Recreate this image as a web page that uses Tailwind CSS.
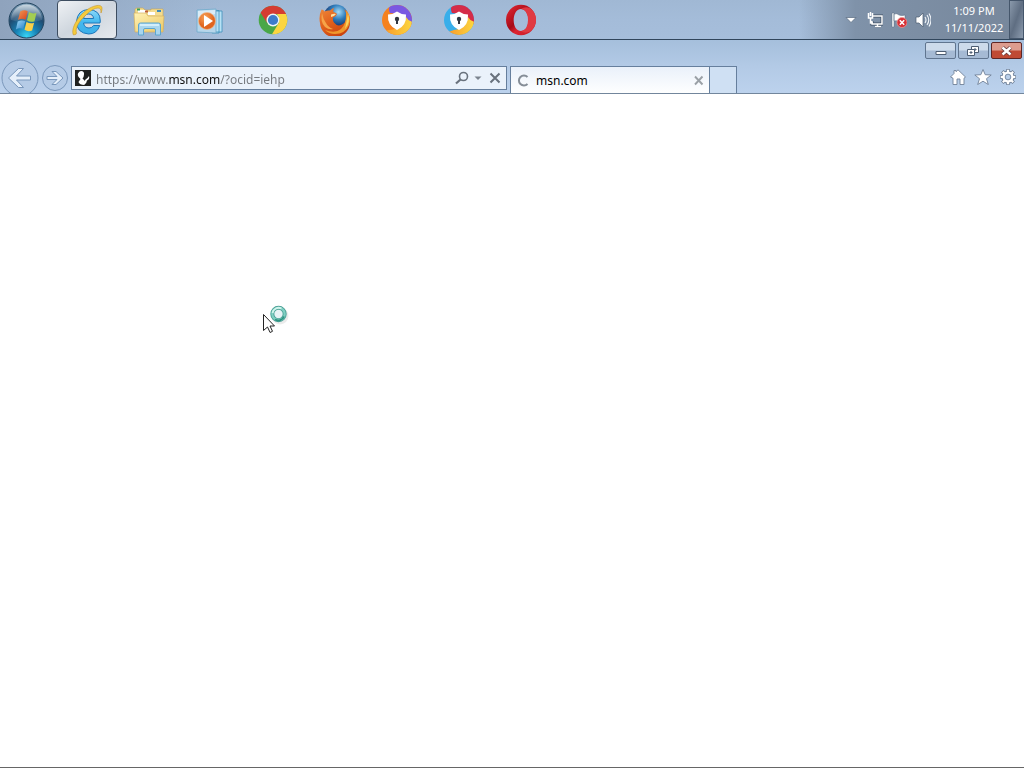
<!DOCTYPE html>
<html lang="en">
<head>
  <meta charset="UTF-8">
  <meta name="viewport" content="width=device-width, initial-scale=1.0">
  <title>msn.com</title>
  <script src="https://cdn.jsdelivr.net/npm/@tailwindcss/browser@4"></script>
</head>
<body class="relative flex flex-col h-screen overflow-hidden bg-white text-xs font-['Noto_Sans','Open_Sans',sans-serif]">

  <!-- Taskbar -->
  <header class="flex shrink-0 justify-between h-10 border-b border-[#31465c] bg-linear-to-b from-[#a0b8d4] via-[#a4bcd9] to-[#a6bedb]">
    <nav class="flex items-center bg-linear-to-r from-[#8fa3bd] to-transparent to-40%" aria-label="Taskbar">
      <button type="button" aria-label="Start" class="w-14 pl-2 h-full">
        <svg class="size-[38px]" viewBox="0 0 38 38">
          <defs>
            <radialGradient id="orb" cx=".5" cy=".95" r=".9"><stop offset="0" stop-color="#38d5f5"/><stop offset=".35" stop-color="#1881b4"/><stop offset=".7" stop-color="#1f4a70"/><stop offset="1" stop-color="#7799b3"/></radialGradient>
            <linearGradient id="gloss" x2="0" y2="1"><stop stop-color="#fff" stop-opacity=".6"/><stop offset="1" stop-color="#fff" stop-opacity=".05"/></linearGradient>
            <linearGradient id="wr" x2="1" y2="1"><stop stop-color="#ef9a55"/><stop offset="1" stop-color="#d8401c"/></linearGradient>
            <linearGradient id="wb" x2="1" y2="1"><stop stop-color="#9bd8f8"/><stop offset="1" stop-color="#287fc5"/></linearGradient>
          </defs>
          <circle cx="18.500" cy="19.500" r="17.500" fill="url(#orb)" stroke="#24455f"/>
          <path d="M3 19a15.500 15.500 0 0 1 31 0q-15.500 5-31 0z" fill="url(#gloss)"/>
          <path d="M12.200 10.500q4-2.500 7.500-.3l-2 8.500q-4-2-7.700.4z" fill="url(#wr)"/>
          <path d="M21 11q4 2.500 7.500.7l-2 8.500q-4 1.500-7.500-1z" fill="#a3cd52"/>
          <path d="M9.700 20.500q4-2 7.500-.2l-2 8q-3.500-2-7.300.2z" fill="url(#wb)"/>
          <path d="M18.500 21q4 2.300 7.600.7l-2 7.700q-4 1.800-7.600-.7z" fill="#fad048"/>
        </svg>
      </button>
      <div class="flex items-center h-full">
        <button type="button" aria-label="Internet Explorer" class="flex items-center justify-center w-[60px] h-full mx-px rounded-sm border border-[#3d4d60] bg-linear-to-br from-[#eff2f5] via-[#cfd6de] to-[#e5e9ee]">
          <svg class="w-8 h-8" viewBox="0 0 32 32">
            <defs><linearGradient id="ie" x2="0" y2="1"><stop stop-color="#8ed9fa"/><stop offset=".5" stop-color="#45b9ef"/><stop offset="1" stop-color="#3caee8"/></linearGradient></defs>
            <path d="M29 19H12.500q.8 5 5.500 5 3.200 0 4.500-2.500h6.200Q26 30 17.600 30 5.500 29 5.500 17.500 6.500 6 17.500 5.500 29.500 6 29.300 17zM12.600 14.500h10q-.5-4.500-5-4.500t-5 4.500z" fill="url(#ie)" stroke="#1c76ba"/>
            <path d="M2.500 31C-1 25 8 10 18 4.500 25 .5 31 .5 31 4q.2 2-1 5 .3-5-3-5-5 0-12 7C7 18 4 25 5.500 29q.5 1.500-3 2z" fill="#f5cb3c" stroke="#c8962b" stroke-width=".6"/>
          </svg>
        </button>
        <button type="button" aria-label="Windows Explorer" class="flex items-center justify-center w-[62px] h-full">
          <svg class="w-8 h-8" viewBox="0 0 32 32">
            <defs><linearGradient id="fold" x2="1" y2="1"><stop stop-color="#fff2b5"/><stop offset="1" stop-color="#ecc864"/></linearGradient></defs>
            <path d="M2 5l2-1h6l2 2h6V5h12v20H2z" fill="#f3dc90" stroke="#c9a552" stroke-width=".6"/>
            <path d="M5 6h8v3H5zM15 8h7v3h-7z" fill="#fff"/><path d="M4 4.500h3v2H4z" fill="#38a05a"/><path d="M24 6h4v2h-4z" fill="#3989bd"/><path d="M12 6.500h3v2h-3z" fill="#bd5c38"/>
            <path d="M1 9h12l2 3h16l-1 16H2z" fill="url(#fold)" stroke="#d2b061" stroke-width=".7"/>
            <path d="M5.500 31V21q0-2 2-2h18q2 0 2 2v10h-5v-5q0-1.500-1.500-1.500h-9Q10.500 24.500 10.500 26v5z" fill="#a9d6ee" stroke="#5ca6cf"/>
            <path d="M7 21h19" stroke="#e1f6ff" stroke-width="1.500"/>
          </svg>
        </button>
        <button type="button" aria-label="Windows Media Player" class="flex items-center justify-center w-[62px] h-full">
          <svg class="w-8 h-8" viewBox="0 0 32 32">
            <defs><radialGradient id="wmp" cx=".4" cy=".3"><stop stop-color="#f9a55a"/><stop offset="1" stop-color="#e0651f"/></radialGradient></defs>
            <path d="M19 7h8v21h-8zM17 6.500h7V29h-7z" fill="#b8e2f5" stroke="#3d8fba" stroke-width=".8"/>
            <path d="M2 6l19-1v24L2 28z" fill="#b6d6eb" stroke="#6fa9ca" stroke-width=".8"/><path d="M3 7l17-1v4L3 14z" fill="#d9ecf7"/>
            <circle cx="12" cy="17" r="8.500" fill="url(#wmp)" stroke="#f0bd90" stroke-width=".7"/>
            <path d="M9 11l9 6-9 6z" fill="#fff"/>
          </svg>
        </button>
        <button type="button" aria-label="Google Chrome" class="flex items-center justify-center w-[62px] h-full">
          <svg class="w-8 h-8" viewBox="0 0 32 32">
            <circle cx="16" cy="16" r="14.300" fill="#49a747"/>
            <path d="M3.600 8.850A14.300 14.300 0 0 1 28.400 8.850L29 10H16a6.500 6.500 0 0 0-5.600 9.500z" fill="#d53c32"/>
            <path d="M29 10A14.300 14.300 0 0 1 15 30.300l6.600-11Q23.500 14.500 20 10z" fill="#fbd540"/>
            <circle cx="16" cy="16" r="6.500" fill="#f1f5f6"/><circle cx="16" cy="16" r="5.100" fill="#3d7ccb"/>
          </svg>
        </button>
        <button type="button" aria-label="Firefox" class="flex items-center justify-center w-[62px] h-full">
          <svg class="w-8 h-8" viewBox="0 0 32 32">
            <defs>
              <radialGradient id="globe" cx=".6" cy=".3" r=".6"><stop stop-color="#a5dcf8"/><stop offset=".5" stop-color="#2f7cba"/><stop offset="1" stop-color="#15306a"/></radialGradient>
              <linearGradient id="fox" x2=".6" y2="1"><stop stop-color="#ee8a3c"/><stop offset=".5" stop-color="#e2621d"/><stop offset="1" stop-color="#c9430f"/></linearGradient>
            </defs>
            <circle cx="17" cy="13" r="12.500" fill="url(#globe)"/>
            <path d="M2.500 5.500q2 0 3 2Q8 6 11 6.500q3-3 4-2.500-1 2-.5 4 3 1 3.500 2-1 3-4 3.500-.5 3 1 5 3 4 7 2.500 5-2 5.500-7 .5-5-2.500-9 6.500 5 6 12.500A15 15 0 0 1 1 19Q-.5 12 2.500 5.500z" fill="url(#fox)"/>
            <path d="M27 6q6 7 3 15-4 9-14 9-6 0-10-4 10 4 16-1 6-5 5-19z" fill="#f0982c"/>
            <path d="M29 10q3 8-3 15 1-5 3-15z" fill="#fbd45a"/>
            <path d="M3 9q-2 9 3 14 4 3 8 2-5-2-7-6-3-4-4-10z" fill="#f7a448"/>
            <path d="M12 10.500q3-1 5-.5l-2 2-3 1z" fill="#ffe0a0"/>
          </svg>
        </button>
        <button type="button" aria-label="Avast Secure Browser" class="flex items-center justify-center w-[62px] h-full">
          <svg class="w-8 h-8" viewBox="0 0 32 32">
            <defs>
              <clipPath id="disc"><circle cx="16" cy="16" r="15"/></clipPath>
              <linearGradient id="gold" x2="1" y2="0"><stop stop-color="#f79a2c"/><stop offset="1" stop-color="#fcd940"/></linearGradient>
            </defs>
            <g clip-path="url(#disc)">
              <path d="M0 0h32v32H0z" fill="#f5811f"/>
              <path d="M9 0h23v21l-7-4Q21 9 9 9 7 6 9 0z" fill="#7a58e2"/>
              <path d="M32 18q-5-1-7-5-2 12-17 13l-5 1 5 5h24z" fill="url(#gold)"/>
            </g>
            <path d="M16 7.500q4 3 9 3 1 11-9 15.500Q6 21.500 7 10.500q5 0 9-3z" fill="#fff"/>
            <circle cx="16" cy="15" r="2.200" fill="#303641"/><path d="M15 15h2v5h-2z" fill="#303641"/>
          </svg>
        </button>
        <button type="button" aria-label="AVG Secure Browser" class="flex items-center justify-center w-[62px] h-full">
          <svg class="w-8 h-8" viewBox="0 0 32 32">
            <g clip-path="url(#disc)">
              <path d="M0 0h32v32H0z" fill="#38aeea"/>
              <path d="M9 0h23v21l-7-4Q21 9 9 9 7 6 9 0z" fill="#d52c48"/>
              <path d="M32 18q-5-1-7-5-2 12-14 13l-6 2 3 4h24z" fill="url(#gold)"/>
            </g>
            <path d="M16 7.500q4 3 9 3 1 11-9 15.500Q6 21.500 7 10.500q5 0 9-3z" fill="#fff"/>
            <circle cx="16" cy="15" r="2.200" fill="#303641"/><path d="M15 15h2v5h-2z" fill="#303641"/>
          </svg>
        </button>
        <button type="button" aria-label="Opera" class="flex items-center justify-center w-[62px] h-full">
          <svg class="w-8 h-8" viewBox="0 0 32 32">
            <defs><linearGradient id="op" x2="1" y2="1"><stop stop-color="#e92b36"/><stop offset=".45" stop-color="#a60b18"/><stop offset=".6" stop-color="#dd2531"/><stop offset="1" stop-color="#c21c28"/></linearGradient></defs>
            <path fill-rule="evenodd" d="M16 .8a15 15.200 0 1 1 0 30.400A15 15.200 0 0 1 16 .8zM16 5c-9.500 0-10 22 0 22s9.500-22 0-22z" fill="url(#op)"/>
            <path d="M16 5q4-3 9-1 6 5 6 12t-6 11.500q-5 2.500-9-.5 7-1 7-11T16 5z" fill="#e03a42"/>
          </svg>
        </button>
      </div>
    </nav>

    <!-- Tray -->
    <div class="flex items-center bg-linear-to-r from-transparent via-[#7f92a9] via-25% to-[#77879b] pl-11">
      <div class="flex items-center gap-2">
        <button type="button" aria-label="Show hidden icons" class="w-4">
          <svg class="w-4 h-4" viewBox="0 0 16 16"><path d="M3 5.500h10l-5 5z" fill="#fff" stroke="#56687e" stroke-width=".7"/></svg>
        </button>
        <svg class="w-4 h-4" viewBox="0 0 16 16" aria-label="Network">
          <path d="M6 4h9v8H5V9M8 14h6M10.500 12v2" fill="none" stroke="#3e4f63" stroke-width="3"/>
          <path d="M6 4h9v8H5V9M8 14.500h6M10.500 12v2M1.500 1v5h4V1M3.500 0v4M3.500 6v5H6" fill="none" stroke="#fff" stroke-width="1.500"/>
        </svg>
        <svg class="w-4 h-4" viewBox="0 0 16 16" aria-label="Action Center">
          <path d="M1 1h2v14H1zM3 2q3-1 5 1 3 1 6 0v7q-3 1-6 0-2-2-5-1z" fill="#fff" stroke="#56687e" stroke-width=".5"/>
          <circle cx="11" cy="10.500" r="5" fill="#d83035" stroke="#f29a97" stroke-width=".7"/>
          <path d="M8.800 8.300l4.400 4.400M13.200 8.300l-4.400 4.400" stroke="#fff" stroke-width="1.500"/>
        </svg>
        <svg class="w-4 h-4" viewBox="0 0 16 16" aria-label="Volume">
          <path d="M1 5h3l4-4v14l-4-4H1z" fill="#fff" stroke="#4a5b70" stroke-width=".7"/>
          <path d="M10 5q2 3 0 6M12 3q3.500 5 0 10M14 1.500q4 6.500 0 13" fill="none" stroke="#f2f6fa" stroke-width="1.100"/>
        </svg>
      </div>
      <time datetime="2022-11-11T13:09" class="w-[78px] pl-2 pb-0.5 text-center text-[11px] leading-[17px] text-white"><span class="block">1:09 PM</span><span class="block">11/11/2022</span></time>
      <button type="button" aria-label="Show desktop" class="w-[15px] h-full border border-[#45566b] bg-linear-to-br from-[#8a99ab] via-[#5f6e82] to-[#8d9caf]"></button>
    </div>
  </header>

  <!-- Browser frame -->
  <div class="shrink-0 h-[54px] overflow-hidden border-b border-[#72869c] bg-linear-to-b from-[#a5bfdc] via-[#b3cae6] to-[#bcd2ed]">
    <div class="flex justify-end gap-0.5 h-[19px] pt-0.5 pr-0.5">
      <button type="button" aria-label="Minimize" class="flex items-center justify-center w-[31px] rounded-xs border border-[#60758f] bg-linear-to-b from-[#cddbeb] from-45% to-[#a5bad4] to-55%">
        <svg class="w-4 h-4" viewBox="0 0 16 16"><path d="M3 8.500h10v3H3z" fill="#fff" stroke="#4c5d72"/></svg>
      </button>
      <button type="button" aria-label="Restore" class="flex items-center justify-center w-[31px] rounded-xs border border-[#60758f] bg-linear-to-b from-[#cddbeb] from-45% to-[#a5bad4] to-55%">
        <svg class="w-4 h-4" viewBox="0 0 16 16"><path fill-rule="evenodd" d="M5.500 3.500h7v6h-7zM8 6v1h2V6z" fill="#fff" stroke="#4c5d72"/><path fill-rule="evenodd" d="M1.500 6.500h7v6h-7zM4 9v1h2V9z" fill="#fff" stroke="#4c5d72"/></svg>
      </button>
      <button type="button" aria-label="Close" class="flex items-center justify-center w-[31px] rounded-xs border border-[#5f2625] bg-linear-to-b from-[#dd9c8e] from-45% to-[#c04a34] to-55%">
        <svg class="w-4 h-4" viewBox="0 0 16 16"><path d="M3.500 4.500l8 7M11.500 4.500l-8 7" stroke="#63383a" stroke-width="4"/><path d="M3.500 4.500l8 7M11.500 4.500l-8 7" stroke="#fff" stroke-width="2.400"/></svg>
      </button>
    </div>

    <div class="flex items-start">
      <div class="flex items-center w-[71px] shrink-0">
        <button type="button" aria-label="Back">
          <svg class="w-10 h-[38px]" viewBox="0 0 40 38">
            <circle cx="20" cy="19" r="18" fill="#b5cbe6" stroke="#7b98bb"/>
            <path d="M8.500 19l10-9.500h5l-7 7.500h14v4h-14l7 7.500h-5z" fill="#e5effa" stroke="#7997bb"/>
          </svg>
        </button>
        <button type="button" aria-label="Forward" class="pl-0.5">
          <svg class="w-[27px] h-[38px]" viewBox="0 0 27 38">
            <circle cx="13" cy="19" r="12.500" fill="#b5cbe6" stroke="#7b98bb"/>
            <path d="M21 19l-7 6.500h-4l5-5H5v-3h10l-5-5h4z" fill="#e5effa" stroke="#7997bb"/>
          </svg>
        </button>
      </div>
      <form class="flex items-center mt-[7px] w-[436px] h-6 pl-[3px] pr-1 border border-[#667f9d] bg-[#eaf2fb]" onsubmit="return false">
        <svg class="w-4 h-4 shrink-0" viewBox="0 0 16 16"><path d="M0 0h16v16H0z" fill="#20211f"/><path d="M6 1Q9.500 1 9 4.500q0 2-1.500 4l2 2V15q-5 0-6-3l2-3Q2 6 3 3.500T6 1zM14 6q1 3-2 4.500-.5 3.500-3 4.500 0-4 1.500-5.500Q12.500 8.500 14 6z" fill="#fff"/></svg>
        <input type="text" aria-label="Address" value="https://www.msn.com/?ocid=iehp" spellcheck="false" class="flex-1 min-w-0 ml-[5px] h-[22px] pt-0.5 leading-5 text-transparent caret-black bg-clip-text bg-[linear-gradient(90deg,#75797e_72px,#111_72px,#111_124px,#75797e_124px)] outline-none">
        <button type="submit" aria-label="Search"><svg class="w-4 h-4" viewBox="0 0 16 16"><circle cx="9.500" cy="6.500" r="4" fill="none" stroke="#69727d" stroke-width="1.600"/><path d="M6.500 9.500l-4.500 4" stroke="#69727d" stroke-width="2.200"/></svg></button>
        <button type="button" aria-label="Show address list"><svg class="w-4 h-4" viewBox="0 0 16 16"><path d="M4.500 6.500h7L8 10z" fill="#7b848f"/></svg></button>
        <button type="button" aria-label="Stop"><svg class="w-4 h-4" viewBox="0 0 16 16"><path d="M4.500 3.500l9 9M13.500 3.500l-9 9" stroke="#69727d" stroke-width="2"/></svg></button>
      </form>
      <div class="flex items-center mt-[7px] ml-[3px] w-[200px] h-7 pl-1.5 pr-1 border border-b-0 border-[#667f9d] bg-linear-to-b from-[#eaf1fa] to-white">
        <svg class="w-3.5 h-3.5" viewBox="0 0 14 14"><path d="M10.500 3A5 5 0 1 0 10.500 10" fill="none" stroke="#858d97" stroke-width="2"/></svg>
        <button type="button" class="flex-1 pl-[5px] text-left text-black">msn.com</button>
        <button type="button" aria-label="Close tab"><svg class="w-3 h-3" viewBox="0 0 12 12"><path d="M2 1.500l7.500 8M9.500 1.500L2 9.500" stroke="#9aa0a6" stroke-width="1.900"/></svg></button>
      </div>
      <button type="button" aria-label="New tab" class="mt-[7px] w-[27px] h-7 border border-l-0 border-b-0 border-[#667f9d] bg-[#cfe0f3]"></button>
      <div class="flex gap-2 ml-auto pr-2 mt-2.5">
        <button type="button" aria-label="Home"><svg class="w-4 h-4" viewBox="0 0 16 16"><path d="M8 .8L15.500 8l-1.500 1.200V15.500H10V10H7v5.500H3V9.200L.5 8 4 4.500v-3h2v1.200z" fill="#fff" stroke="#708198" stroke-width=".9"/></svg></button>
        <button type="button" aria-label="Favorites"><svg class="w-[18px] h-4" viewBox="0 0 18 16"><path d="M9 .5l2.200 5.200 6 .3-4.700 3.700 1.800 5.800L9 12.200l-5.300 3.300 1.800-5.800L.8 6l6-.3z" fill="#fff" stroke="#708198" stroke-width=".9"/></svg></button>
        <button type="button" aria-label="Tools"><svg class="w-4 h-4" viewBox="0 0 16 16">
          <path d="M8 0v16M0 8h16M2.300 2.300l11.400 11.400M13.700 2.300L2.300 13.700" stroke="#708198" stroke-width="3.600"/>
          <circle cx="8" cy="8" r="4.600" fill="none" stroke="#708198" stroke-width="4"/>
          <path d="M8 .7v14.600M.7 8h14.600M2.800 2.800l10.400 10.400M13.200 2.800L2.800 13.200" stroke="#fff" stroke-width="2.200"/>
          <circle cx="8" cy="8" r="4.400" fill="#b9cfea" stroke="#fff" stroke-width="2.400"/>
          <circle cx="8" cy="8" r="2.800" fill="#b9cfea" stroke="#708198" stroke-width=".8"/>
        </svg></button>
      </div>
    </div>
  </div>

  <main class="flex-1 border-b border-[#666]"></main>

  <!-- Busy pointer -->
  <svg class="absolute left-[262px] top-[304px] w-8 h-8 pointer-events-none" viewBox="0 0 32 32">
    <circle cx="18" cy="12" r="8.500" fill="#000" opacity=".08"/>
    <circle cx="16.500" cy="10" r="6.200" fill="#e8f3f6" stroke="#4a9f95" stroke-width="4"/>
    <circle cx="16.500" cy="10" r="6.200" fill="none" stroke="#7fcfc2" stroke-width="2.200"/>
    <path d="M10.500 9a6.200 6.200 0 0 1 9-4.500" fill="none" stroke="#d1f4ec" stroke-width="1.800"/>
    <path d="M13 15.500a6.200 6.200 0 0 0 9-3" fill="none" stroke="#2d9381" stroke-width="2"/>
    <path d="M1.500 10.500v16l4-3.500 2.600 5.500 2.400-1.200L8 22h4.500z" fill="#fff" stroke="#222"/>
  </svg>
</body>
</html>
